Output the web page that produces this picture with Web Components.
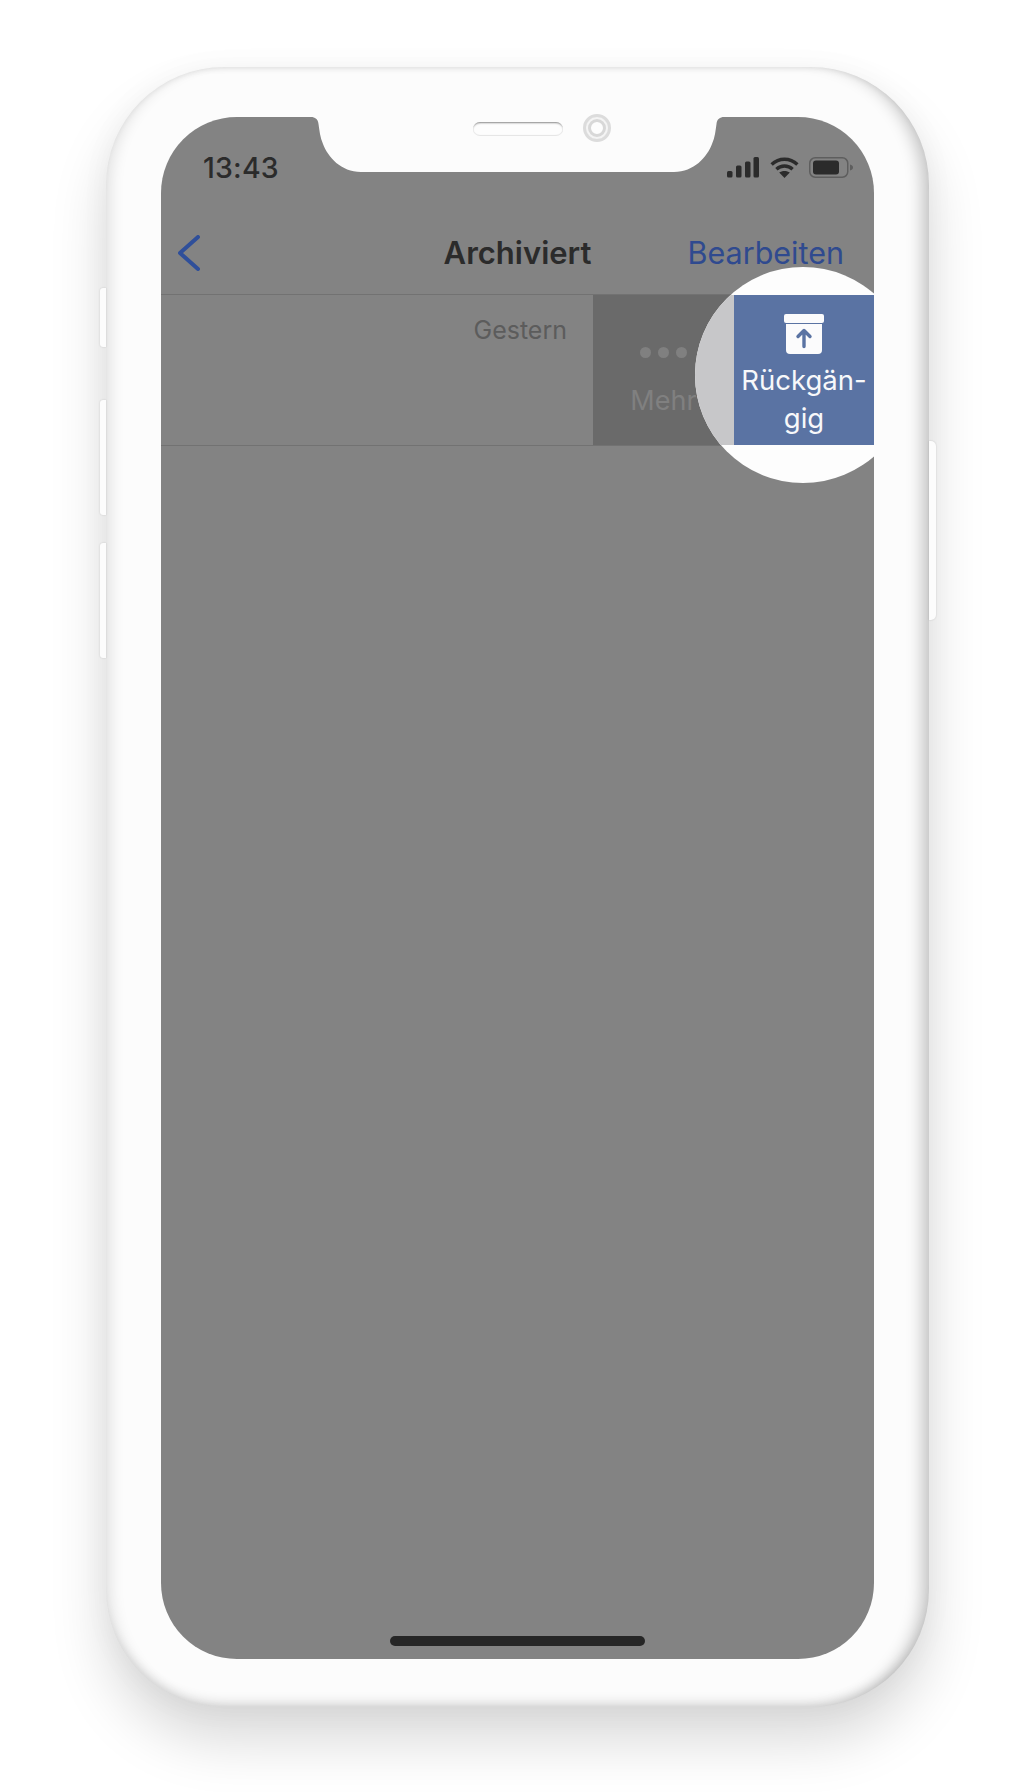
<!DOCTYPE html>
<html lang="de"><head><meta charset="utf-8"><title>Archiviert</title>
<style>
html,body{margin:0;padding:0;background:#fff}
body{font-family:Inter,"Liberation Sans",sans-serif;width:1034px;height:1792px;overflow:hidden}
phone-frame{margin:67px 0 0 106px}
</style></head><body>
<phone-frame>
  <status-bar time="13:43"></status-bar>
  <nav-bar title="Archiviert" action="Bearbeiten"></nav-bar>
  <swipe-row date="Gestern"></swipe-row>
</phone-frame>
<script>
function def(name, html){
  customElements.define(name, class extends HTMLElement{
    connectedCallback(){
      if(this.shadowRoot) return;
      const r=this.attachShadow({mode:'open'});
      r.innerHTML=typeof html==='function'?html(this):html;
    }
  });
}
def('phone-frame',`<style>
:host{display:block;position:relative;width:823px;height:1640px;box-sizing:border-box;padding:50px 55px 48px 55px;border-radius:118px;background:#fcfcfc;
box-shadow:0 34px 56px rgba(0,0,0,.15),0 2px 30px rgba(0,0,0,.04),inset -16px 0 16px -9px rgba(0,0,0,.22),inset 14px 0 14px -9px rgba(0,0,0,.1),inset 0 -12px 12px -8px rgba(0,0,0,.14),inset 0 5px 6px -4px rgba(0,0,0,.09)}
.screen{position:relative;height:100%;display:flex;flex-direction:column;background:#838383;border-radius:76px;overflow:hidden}
.btn{position:absolute;background:#fcfcfc;box-shadow:0 0 2px rgba(0,0,0,.16)}
.l{left:-6px;width:6px;border-radius:3px 0 0 3px}
.r{right:-7px;width:7px;top:374px;height:179px;border-radius:0 5px 5px 0}
.notch{position:absolute;left:150px;top:0;width:413px;height:55px;display:block;z-index:5}
.speaker{position:absolute;left:367px;top:55px;width:90px;height:14px;box-sizing:border-box;border-radius:7px;background:#fdfdfd;box-shadow:inset 0 2px 2px -1px #888,inset 0 -1px 1px #e4e4e4;z-index:6}
.cam{position:absolute;left:477px;top:47px;width:28px;height:28px;box-sizing:border-box;border-radius:50%;border:3px solid #dcdcdc;background:#fdfdfd;box-shadow:inset 0 0 0 2px #f4f4f4,inset 0 0 0 5px #d8d8d8;z-index:6}
.home{margin-top:auto;margin-bottom:13px;align-self:center;width:255px;height:10px;border-radius:5px;background:#262626;flex:none}
</style>
<div class="btn l" style="top:221px;height:59px"></div>
<div class="btn l" style="top:333px;height:115px"></div>
<div class="btn l" style="top:476px;height:115px"></div>
<div class="btn r"></div>
<div class="speaker"></div><div class="cam"></div>
<div class="screen">
<svg class="notch" viewBox="0 0 413 55"><path fill="#fcfcfc" d="M0,0C4,0 7,2 7.5,7C8.5,14 9,20 12,27C17,40 30,55 50,55L363,55C383,55 396,40 401,27C404,20 404.5,14 405.5,7C406,2 409,0 413,0Z"/></svg>
<slot></slot>
<div class="home"></div>
</div>`);
def('status-bar',el=>`<style>
:host{display:flex;flex:none;height:88px;box-sizing:border-box;padding:34px 21px 0 42px;justify-content:space-between;align-items:flex-start;color:#2b2b2b}
.t{font-size:28.5px;font-weight:500;line-height:33px;letter-spacing:.2px}
.i{display:flex;gap:10px;padding-top:6px}
svg{display:block}
.s{margin-right:1px}
</style><span class="t">${el.getAttribute('time')}</span>
<div class="i">
<svg class="s" width="32" height="21" viewBox="0 0 32 21" fill="#2b2b2b"><rect x="0" y="14" width="5.500" height="6.500" rx="1.500"/><rect x="9" y="8.500" width="5.500" height="12" rx="1.500"/><rect x="18" y="4.500" width="5.500" height="16" rx="1.500"/><rect x="26.500" y="0" width="5.500" height="20.500" rx="1.500"/></svg>
<svg width="29" height="21" viewBox="0 0 29 21" fill="none" stroke="#2b2b2b" stroke-width="3.4"><path d="M1.600 7.500C9 .5 20 .5 27.400 7.500"/><path d="M6.400 12.200C11 8 18 8 22.600 12.200"/><path fill="#2b2b2b" stroke="none" d="M14.500 21L9.200 15.600C12 13.300 17 13.300 19.800 15.600Z"/></svg>
<svg width="44" height="21" viewBox="0 0 44 21"><rect x=".75" y=".75" width="38" height="19.500" rx="5.500" fill="none" stroke="#5e5e5e" stroke-width="1.500"/><rect x="4" y="3.500" width="26" height="14" rx="3" fill="#2b2b2b"/><path d="M41 7.500C43 8 44 9.200 44 10.500S43 13 41 13.500Z" fill="#5e5e5e"/></svg>
</div>`);
def('nav-bar',el=>`<style>
:host{display:grid;grid-template-columns:1fr auto 1fr;align-items:center;flex:none;height:90px;box-sizing:border-box;border-bottom:1px solid #727272;padding:7px 30px 0 30px;font-size:30.500px;line-height:38px}
svg{display:block;margin-left:-13px}
h1{margin:0;font-size:31px;font-weight:600;color:#2b2b2b}
a{justify-self:end;color:#2f4a8f}
</style><svg width="22" height="36" viewBox="0 0 22 36" fill="none" stroke="#2f4f9a" stroke-width="4" stroke-linecap="round" stroke-linejoin="round"><path d="M20 2L2 18L20 34"/></svg>
<h1>${el.getAttribute('title')}</h1><a>${el.getAttribute('action')}</a>`);
def('swipe-row',el=>`<style>
:host{display:flex;position:relative;flex:none;height:151px;box-sizing:border-box;border-bottom:1px solid #727272}
.main{flex:1;display:flex;justify-content:flex-end;padding:19px 26px 0 0;font-size:25px;line-height:32px;color:#5c5c5c;background:#838383}
.more{width:141px;flex:none;background:#6a6a6a;color:#808080;display:flex;flex-direction:column;align-items:center;padding-top:52px;box-sizing:border-box;font-size:27px;line-height:38px;gap:24px}
.dots{display:flex;gap:7px}.dots i{width:11px;height:11px;border-radius:50%;background:#808080}
.undo{width:140px;flex:none;box-sizing:border-box;background:#5a73a3;color:#f7f8fa;display:flex;flex-direction:column;align-items:center;padding-top:19px;font-size:27.500px;line-height:38px;text-align:center;position:relative;z-index:2}
.undo svg{display:block;margin-bottom:7px}
.spot{position:absolute;left:534px;top:-28px;width:216px;height:216px;border-radius:50%;background:#fdfdfd;overflow:hidden;z-index:1}
.band{position:absolute;left:0;right:0;top:28px;height:150px;background:#c7c7c9}
</style>
<div class="main">${el.getAttribute('date')}</div>
<div class="more"><div class="dots"><i></i><i></i><i></i></div><span>Mehr</span></div>
<div class="spot"><div class="band"></div></div>
<div class="undo"><svg width="40" height="40" viewBox="0 0 40 40"><rect x="0" y="0" width="40" height="9" rx="2" fill="#fbfbfc"/><path d="M2 10H38V36a4 4 0 0 1-4 4H6a4 4 0 0 1-4-4Z" fill="#fbfbfc"/><path d="M20 32.500V17M14 22.500L20 16.500L26 22.500" fill="none" stroke="#5a73a3" stroke-width="3.400" stroke-linecap="round" stroke-linejoin="round"/></svg><span>Rückgän-<br>gig</span></div>`);
</script></body></html>
